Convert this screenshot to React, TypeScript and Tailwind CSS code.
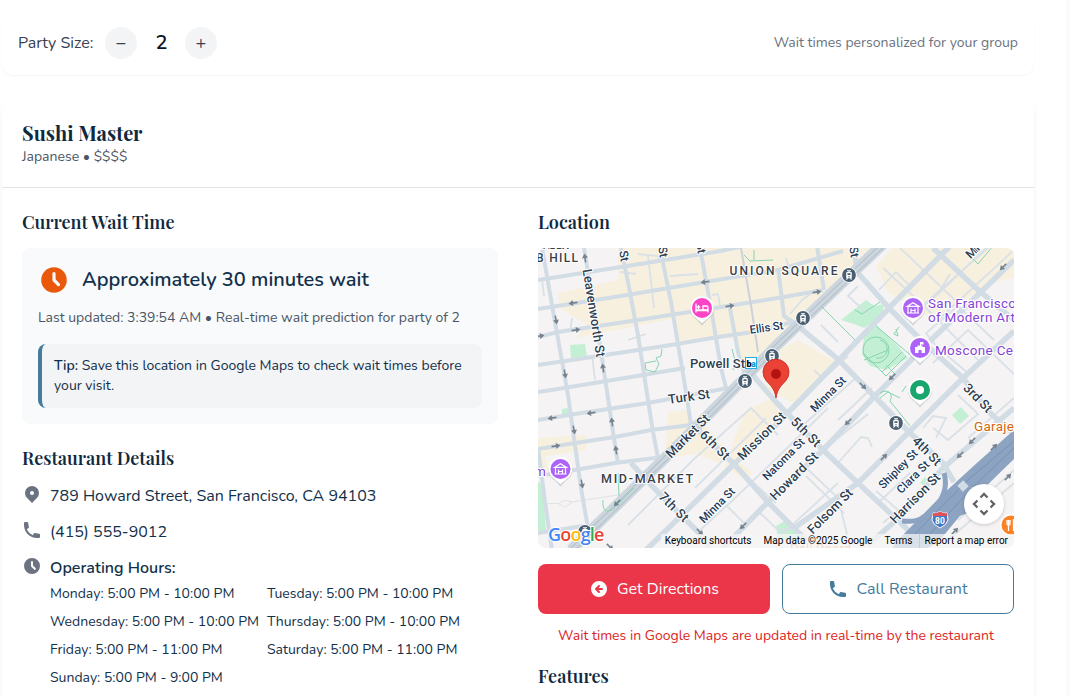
import React, { useState } from "react";
import { HiArrowCircleLeft, HiClock, HiLocationMarker, HiPhone } from "react-icons/hi";

const HOURS = [
  "Monday: 5:00 PM - 10:00 PM",
  "Tuesday: 5:00 PM - 10:00 PM",
  "Wednesday: 5:00 PM - 10:00 PM",
  "Thursday: 5:00 PM - 10:00 PM",
  "Friday: 5:00 PM - 11:00 PM",
  "Saturday: 5:00 PM - 11:00 PM",
  "Sunday: 5:00 PM - 9:00 PM",
];

function Heading({ children }: { children: React.ReactNode }) {
  return (
    <h3 className="font-['Playfair_Display','Liberation_Serif',serif] text-lg leading-7 font-semibold text-[#0f2940]">
      {children}
    </h3>
  );
}

const AREAS = [
  "80,0 341,0 300,40 260,80 240,95 205,122 198,90 142,94 138,70 38,90 48,76 22,60 20,45 80,32",
  "338,18 355,0 476,0 476,30 450,35 430,50 395,73 380,60 350,45",
  "238,104 260,92 300,115 255,155 226,140",
  "130,164 152,162 152,175 168,178 200,214 178,214 158,206 127,210",
  "0,202 0,190 48,187 48,202 8,208 10,225 2,228",
  "207,163 240,147 240,168 222,186 200,214 215,224 207,232 186,218",
];

const GREENS = [
  "303,72 328,52 336,58 346,56 344,68 326,80 316,76",
  "326,88 338,77 360,98 370,110 348,122 332,118 324,106",
  "32,97 47,96 49,109 33,110",
  "24,161 30,160 31,166 24,167",
  "0,234 4,236 8,282 0,284",
  "423,159 431,168 422,176 414,167",
  "238,278 250,271 268,292 240,292",
  "382,235 387,229 389,231 386,237",
];

const MINOR = [
  "90,277 155,212 213,160 218,165 240,187",
  "157,240 228,170",
  "160,284 195,252 245,204 290,160",
  "188,257 208,277",
  "210,230 238,255",
  "262,180 320,128",
  "240,290 300,235",
  "221,264 240,282 258,280",
  "320,235 300,215 323,189 330,190 334,199",
  "268,228 306,265",
  "285,202 330,166",
  "300,172 334,140",
  "262,214 300,250 310,290",
  "340,255 372,225",
  "338,243 360,262 345,275",
  "345,20 385,57 400,72 440,112",
  "341,42 358,24 374,40",
  "374,68 400,46 450,-2",
  "385,57 450,0",
  "400,72 476,2",
  "360,-2 420,55",
  "412,26 400,46",
  "430,125 400,100 388,85 420,58 456,92",
  "395,115 430,82 476,126",
  "276,122 285,131 310,108",
  "283,77 300,94",
  "252,66 264,52 278,42",
  "320,38 310,48 330,66",
  "385,180 395,168 408,170 398,190",
  "395,180 410,192 440,166 420,147",
  "430,190 476,150",
  "110,8 116,60",
  "100,6 120,8 122,14",
  "82,24 98,26",
  "132,28 160,26",
  "174,47 180,46 182,58",
  "32,84 34,70",
  "4,31 6,48",
  "54,107 57,132",
  "90,92 108,86",
  "420,272 476,222",
  "340,290 372,262",
  "410,292 476,235",
  "240,25 246,70",
  "248,10 252,26 268,22",
];

const STREETS = [
  "0,32 83,19 177,4 202,-1",
  "0,61 83,48 167,34 240,22 305,3",
  "0,89 20,84 100,72 177,60 240,50 285,42",
  "0,117 67,107 133,97 180,89 215,84 255,74",
  "0,144 20,141 93,129 147,120",
  "0,172 37,166 110,155 190,140",
  "0,201 37,195 77,189 113,182 153,177",
  "0,228 37,222 77,215 125,209",
  "0,285 45,278",
  "4,0 17,74 27,130 30,147 37,197 43,240 50,280",
  "46,0 56,60 64,110 70,150 75,184 80,215",
  "83,0 90,34 100,87 110,152 115,184 120,210",
  "122,0 133,54 143,114 149,150 153,177",
  "162,0 173,60 183,120 188,140",
  "192,60 200,104 207,128",
  "0,200 7,254 14,302",
  "240,20 246,68 255,74",
  "279,-2 286,42",
];

const ARTERIALS = [
  "108,302 195,217 240,175 301,112 351,60 413,-3",
  "183,302 230,254 285,202 335,150 388,97 476,12",
  "256,280 320,235 371,184 425,130 476,83",
  "330,297 355,275 405,220 476,160",
  "152,174 197,217 230,254 268,292",
  "212,124 238,154 285,202 320,235 368,280 385,300",
  "255,74 301,112 338,150 371,184 405,215 416,234",
  "315,-2 320,25 351,60 388,97 425,130 451,164 476,186",
  "395,0 438,40 476,72",
  "93,215 113,237 160,284 172,300",
];

const ARROWS: [number, number, number][] = [
  [47, 10, -98], [35, 55, 172], [167, 34, 172], [192, 58, -8], [18, 72, 80], [38, 82, -8],
  [27, 126, 80], [65, 120, -98], [2, 88, -8], [279, 44, -8], [465, 19, 135], [325, 138, 45],
  [354, 129, 135], [14, 170, 172], [53, 165, 172], [36, 182, 80], [74, 174, -98], [18, 198, -8],
  [78, 202, -98], [44, 236, 80], [79, 255, 135], [205, 278, 135], [310, 174, 135], [346, 209, -45],
  [434, 193, 135], [422, 207, 135], [456, 199, -45], [470, 229, -45], [417, 283, -45], [72, 299, 45],
  [162, 284, 45],
];

const STATIONS = [[311, 27], [265, 70], [234, 108], [207, 133], [358, 175], [47, 284]];

type LabelProps = {
  x: number;
  y: number;
  w: number;
  r?: number;
  size?: number;
  fill?: string;
  weight?: number;
  children: string;
};

function MapLabel({ x, y, w, r = 0, size = 13, fill = "#2f4050", weight = 500, children }: LabelProps) {
  return (
    <text
      transform={`translate(${x} ${y}) rotate(${r})`}
      textAnchor="middle"
      dominantBaseline="central"
      textLength={w}
      fontSize={size}
      fontWeight={weight}
      fill={fill}
      stroke="#ffffff"
      strokeWidth="2"
      strokeLinejoin="round"
      paintOrder="stroke"
    >
      {children}
    </text>
  );
}

function Poi({ x, y, fill, children }: { x: number; y: number; fill: string; children: React.ReactNode }) {
  return (
    <g transform={`translate(${x} ${y})`}>
      <path d="M0 17.5C-1.5 15.5-4 13-7 10.5A12 12 0 1 1 7 10.5C4 13 1.5 15.5 0 17.5Z" fill="#9aa3ab" opacity=".45" />
      <path d="M0 15.5C-1.5 13.5-4 12-7 9.2A11.8 11.8 0 1 1 7 9.2C4 12 1.5 13.5 0 15.5Z" fill="#fff" />
      <circle r="10" fill={fill} />
      {children}
    </g>
  );
}

function Museum() {
  return (
    <g fill="none" stroke="#fff" strokeWidth="1.2">
      <path d="M-6 -1.6L0 -5.2L6 -1.6Z" />
      <path d="M-5 -1V4.5M5 -1V4.5M-6 5H6M-2 4.5V0.5M2 4.5V0.5M-2 2.5H2" />
    </g>
  );
}

function MapCanvas() {
  return (
    <svg viewBox="0 0 476 300" className="block h-full w-full font-[Roboto,sans-serif]">
      <rect width="476" height="300" fill="#f5f3f4" />
      {AREAS.map((p) => <polygon key={p} points={p} fill="#f8f0df" />)}
      {GREENS.map((p) => <polygon key={p} points={p} fill="#c3f0d4" />)}
      <g fill="none" stroke="#d9e1e7" strokeWidth="1.8">
        {MINOR.map((p) => <polyline key={p} points={p} />)}
      </g>
      <path d="M10 255.5H20L27 252L34 254L80 247M20 255.5L27 259L34 254" fill="none" stroke="#dfe3e6" />
      <g fill="none" stroke="#d2dce4" strokeWidth="4">
        {STREETS.map((p) => <polyline key={p} points={p} />)}
      </g>
      <g fill="none" stroke="#d2dce4" strokeWidth="5.5" strokeLinejoin="round">
        {ARTERIALS.map((p) => <polyline key={p} points={p} />)}
      </g>
      <path d="M203 0L213 57L220 104" fill="none" stroke="#cdd2d8" strokeWidth="2" />
      <path d="M345 -4L238 98L187 150L127 210L33 302" fill="none" stroke="#ccd6de" strokeWidth="11" />
      <path d="M343 -4L236 98L185 150L125 210L31 302M348 -3L240 100L189 152L129 212L36 303" fill="none" stroke="#b9c2ca" strokeWidth="1.2" />
      <path d="M283 58L317 92M317 62L324 66L342 54M338 78L376 110M124 101L123 108L118 110L121 116L117 124L108 122L107 115L118 113M206 7L212 13L235 12M216 2V12M434 10L440 16L455 -2M65 252C64 262 68 265 74 262L96 240M80 225L81 248M194 101L197 112L195 122M342 145C350 140 356 146 352 153L372 178M342 150L350 144L362 150M364 144L368 138M326 106L348 128L368 108M344 124L364 104M348 117L358 127M358 81L360 88L356 86L361 79" fill="none" stroke="#85d4b0" strokeWidth="1" />
      <circle cx="338" cy="102" r="13" fill="none" stroke="#85d4b0" />
      <path d="M342 92A8 8 0 1 1 338 110M326 112L350 102" fill="none" stroke="#85d4b0" />
      <path d="M476 182L440 214L405 246L362 290L354 300H390L402 292L440 246L476 211Z" fill="#8ca3c1" />
      <path d="M406 225C412 245 398 262 384 270C376 275 370 273 364 273M438 262C420 262 412 270 394 288" fill="none" stroke="#8ca3c1" strokeWidth="5" />
      <path d="M476 193L430 232L365 298M476 200L434 240L380 299" fill="none" stroke="#7992b4" />
      <rect x="421" y="234" width="8" height="8" transform="rotate(-43 425 238)" fill="#d2dce4" />
      {ARROWS.map(([x, y, r]) => (
        <g key={`${x}-${y}`} transform={`translate(${x} ${y}) rotate(${r})`}>
          <path d="M-4.5 0H1" stroke="#76828d" strokeWidth="1.6" />
          <path d="M0 -3L4.5 0L0 3Z" fill="#76828d" />
        </g>
      ))}

      {STATIONS.map(([x, y]) => (
        <g key={`${x}-${y}`} transform={`translate(${x} ${y})`}>
          <circle r="7.8" fill="#fff" />
          <circle r="6.9" fill="#4a6072" />
          <path d="M-2 -4.3H2M0 -4V-2.5M-2.5 4.6L-1.5 3M2.5 4.6L1.5 3" fill="none" stroke="#fff" strokeWidth="1.1" />
          <rect x="-2.8" y="-3" width="5.6" height="6.2" rx="1" fill="#fff" />
          <path d="M-1.5 -1.7H1.5V0H-1.5ZM-.7 1.2H.7V2.2H-.7Z" fill="#4a6072" />
        </g>
      ))}

      <MapLabel x={12} y={-3} w={38} size={12}>TENDER</MapLabel>
      <MapLabel x={19} y={9.5} w={42} size={12} fill="#394047">B HILL</MapLabel>
      <MapLabel x={245.5} y={22.5} w={108} size={12} fill="#394047">UNION SQUARE</MapLabel>
      <MapLabel x={109} y={230} w={92} size={12.5} fill="#394047">MID-MARKET</MapLabel>
      <MapLabel x={56} y={65} w={89} r={81}>Leavenworth St</MapLabel>
      <MapLabel x={86} y={8} w={11} r={81} size={12}>St</MapLabel>
      <MapLabel x={125} y={4} w={11} r={81} size={12}>St</MapLabel>
      <MapLabel x={163} y={0} w={11} r={81} size={12}>St</MapLabel>
      <MapLabel x={316} y={4} w={11} r={81} size={12}>St</MapLabel>
      <MapLabel x={436} y={2} w={18} r={-45} size={12}>Min</MapLabel>
      <MapLabel x={228.5} y={79.5} w={34} r={-8} size={11.5} fill="#1e3a5c">Ellis St</MapLabel>
      <MapLabel x={179.5} y={115} w={55}>Powell St</MapLabel>
      <MapLabel x={151} y={148.5} w={42} r={-8}>Turk St</MapLabel>
      <MapLabel x={149.5} y={188} w={56} r={-45}>Market St</MapLabel>
      <MapLabel x={177} y={197} w={36} r={45}>6th St</MapLabel>
      <MapLabel x={223.5} y={188} w={62} r={-45}>Mission St</MapLabel>
      <MapLabel x={268} y={184} w={36} r={45}>5th St</MapLabel>
      <MapLabel x={290} y={146} w={45} r={-45} size={11.5} fill="#1e3a5c">Minna St</MapLabel>
      <MapLabel x={245.5} y={211} w={54} r={-45} size={11.5} fill="#1e3a5c">Natoma St</MapLabel>
      <MapLabel x={256} y={228} w={62} r={-45}>Howard St</MapLabel>
      <MapLabel x={179} y={257} w={45} r={-45} size={11.5} fill="#1e3a5c">Minna St</MapLabel>
      <MapLabel x={136} y={259} w={36} r={45}>7th St</MapLabel>
      <MapLabel x={292} y={263} w={58} r={-45}>Folsom St</MapLabel>
      <MapLabel x={360} y={221} w={50} r={-45} size={11.5} fill="#1e3a5c">Shipley St</MapLabel>
      <MapLabel x={375} y={229} w={41} r={-45} size={11.5} fill="#1e3a5c">Clara St</MapLabel>
      <MapLabel x={377} y={250} w={65} r={-45}>Harrison St</MapLabel>
      <MapLabel x={389} y={203} w={35} r={45}>4th St</MapLabel>
      <MapLabel x={440} y={150} w={35} r={45}>3rd St</MapLabel>
      <g fill="#8445d6" fontSize="13.5" stroke="#fff" strokeWidth="2.5" paintOrder="stroke" strokeLinejoin="round">
        <text x="390" y="60" textLength="88">San Francisco</text>
        <text x="390" y="74" textLength="87">of Modern Art</text>
        <text x="397" y="107" textLength="78">Moscone Ce</text>
        <text x="-4" y="228">m</text>
        <text x="436" y="183" fill="#d5650d" textLength="40">Garaje</text>
        <text x="252" y="305" fill="#e0853f">Deli Board</text>
      </g>

      <rect x="207.5" y="109.5" width="11" height="11" fill="#fff" stroke="#21aee6" />
      <text x="208.5" y="118.5" fontSize="9" fontWeight="900" letterSpacing="-.6">b<tspan fill="#159bd7">a</tspan></text>

      <Poi x={164} y={60} fill="#fb43c6">
        <path d="M-6 -4.5V4.5M-6 2.5H6V4.5M-5.5 2H6V-.5Q6 -2 4.5 -2H1V2M-3.5 -3V1M-5.2 -1H-1.8" fill="none" stroke="#fff" strokeWidth="1.3" />
      </Poi>
      <Poi x={375} y={60} fill="#ad63f8"><Museum /></Poi>
      <Poi x={22.5} y={221} fill="#ad63f8"><Museum /></Poi>
      <Poi x={382} y={100} fill="#ad63f8">
        <path d="M-5 5V-1H-2.5V-2.5H0V-6H3.5V-3.5H1V-2.5H2.5V-1H5V5H1.5V2H-1.5V5Z" fill="#fff" />
      </Poi>
      <Poi x={382} y={142} fill="#18a66e"><circle r="4" fill="#fff" /></Poi>
      <g transform="translate(473 277)">
        <circle r="11" fill="#fff" /><circle r="9.5" fill="#fb8325" />
        <path d="M-4 -5V-1Q-4 0 -2.5 0V6M-1 -5V-1Q-1 0 -2.5 0V-5M2.5 6V-5Q5 -3 5 1H2.5" fill="none" stroke="#fff" strokeWidth="1.3" />
      </g>
      <path d="M395 265Q398 266 402 263.5Q406 266 409 265L410 272Q409 277 402 280Q395 277 394 272Z" fill="#4379c6" stroke="#fff" />
      <path d="M395 265Q398 266 402 263.5Q406 266 409 265L409.5 268H394.5Z" fill="#e0525a" />
      <text x="402" y="275.5" textAnchor="middle" fontSize="8.5" fontWeight="700" fill="#fff">80</text>

      <path d="M238 150C236.5 140 232 137 228 132.5A13 13 0 1 1 248 132.5C244 137 239.5 140 238 150Z" fill="#ea4335" stroke="#c5221f" strokeWidth=".8" />
      <circle cx="238" cy="126" r="5" fill="#b31412" />
    </svg>
  );
}

function LocationMap() {
  return (
    <div className="relative h-[300px] overflow-hidden rounded-lg">
      <MapCanvas />
      <div className="absolute bottom-[2px] left-[10px] flex font-['Open_Sans',sans-serif] text-[18px] leading-6 font-semibold tracking-[-0.8px] [-webkit-text-stroke:2px_white] [paint-order:stroke_fill]">
        <span className="text-[#4285f4]">G</span>
        <span className="text-[#ea4335]">o</span>
        <span className="text-[#fbbc04]">o</span>
        <span className="text-[#4285f4]">g</span>
        <span className="text-[#34a853]">l</span>
        <span className="text-[#ea4335]">e</span>
      </div>
      <div className="absolute right-0 bottom-0 flex h-[14px] items-center bg-[#f5f5f5]/75 pr-[6px] font-[Roboto,sans-serif] text-[10px] leading-[14px] whitespace-nowrap text-black">
        <span className="pr-[6px] pl-1">Keyboard shortcuts</span>
        <span className="px-[6px]">Map data ©2025 Google</span>
        <span className="px-[6px]">Terms</span>
        <span className="border-l border-[#c8ccd0] pl-[5px]">Report a map error</span>
      </div>
      <button className="absolute right-[10px] bottom-[24px] flex size-10 items-center justify-center rounded-full bg-white shadow-[0_1px_4px_-1px_rgba(0,0,0,0.3)]">
        <svg viewBox="0 0 24 24" className="size-6" fill="none" stroke="#666666" strokeWidth="2.4">
          <path d="M8.5 5.5L12 2L15.5 5.5M8.5 18.5L12 22L15.5 18.5M5.5 8.5L2 12L5.5 15.5M18.5 8.5L22 12L18.5 15.5" />
        </svg>
      </button>
    </div>
  );
}

export default function App() {
  const [size, setSize] = useState(2);
  return (
    <div className="flex h-[696px] w-full overflow-hidden bg-white font-[Nunito,Lato,sans-serif] text-[#12304a]">
      <main className="flex w-[1066px] flex-col gap-6 pt-[11px] pr-8 pl-[2px]">
        <section className="flex h-16 shrink-0 items-center justify-between rounded-xl px-4 shadow-[0_1px_2px_rgba(0,0,0,0.05)]">
          <div className="flex items-center">
            <span className="w-[87px] text-base whitespace-nowrap text-[#374151]">Party Size:</span>
            <button
              onClick={() => setSize(Math.max(1, size - 1))}
              className="flex size-8 items-center justify-center rounded-full bg-[#f3f4f6] text-lg text-[#374151]"
            >
              −
            </button>
            <span className="w-12 pl-px text-center text-xl font-semibold text-[#0b1526]">{size}</span>
            <button
              onClick={() => setSize(size + 1)}
              className="flex size-8 items-center justify-center rounded-full bg-[#f3f4f6] text-lg text-[#374151]"
            >
              +
            </button>
          </div>
          <span className="text-sm text-[#6b7280]">Wait times personalized for your group</span>
        </section>

        <section className="h-[640px] shrink-0 rounded-xl shadow-[0_4px_6px_-1px_rgba(0,0,0,0.08)]">
          <header className="border-b border-[#e0e2e6] p-5">
            <h2 className="font-['Playfair_Display','Liberation_Serif',serif] text-xl leading-7 font-bold text-[#0f2940]">Sushi Master</h2>
            <p className="text-sm text-[#4b5563]">Japanese • $$$$</p>
          </header>

          <div className="grid grid-cols-2 gap-10 p-5">
            <div>
              <Heading>Current Wait Time</Heading>
              <div className="mt-3 mb-5 rounded-lg bg-[#f9fafc] p-4">
                <div className="mb-3 flex items-center gap-3">
                  <HiClock className="size-8 text-[#ea580c]" />
                  <span className="text-xl font-semibold">Approximately 30 minutes wait</span>
                </div>
                <p className="text-sm whitespace-nowrap text-[#4b5563]">
                  Last updated: 3:39:54 AM • Real-time wait prediction for party of 2
                </p>
                <p className="mt-4 rounded-lg border-l-4 border-[#457b9d] bg-[#f3f4f6] p-3 text-sm">
                  <span className="font-semibold">Tip:</span> Save this location in Google Maps to check wait times before your visit.
                </p>
              </div>

              <Heading>Restaurant Details</Heading>
              <div className="mt-3 flex flex-col gap-3">
                <div className="flex items-start gap-2">
                  <HiLocationMarker className="size-5 text-[#6b7280]" />
                  <span className="text-base">789 Howard Street, San Francisco, CA 94103</span>
                </div>
                <div className="flex items-start gap-2">
                  <HiPhone className="size-5 text-[#6b7280]" />
                  <span className="text-base">(415) 555-9012</span>
                </div>
                <div className="flex items-start gap-2">
                  <HiClock className="size-5 text-[#6b7280]" />
                  <div className="flex-1">
                    <p className="text-base font-semibold">Operating Hours:</p>
                    <div className="mt-1 grid grid-cols-[209px_1fr] gap-2 text-sm whitespace-nowrap">
                      {HOURS.map((h) => <span key={h}>{h}</span>)}
                    </div>
                  </div>
                </div>
              </div>
            </div>

            <div>
              <Heading>Location</Heading>
              <div className="mt-3"><LocationMap /></div>
              <div className="mt-4 grid grid-cols-2 gap-3">
                <button className="flex h-[50px] items-center justify-center gap-2 rounded-lg bg-[#eb3549] text-base text-white">
                  <HiArrowCircleLeft className="size-5" />
                  Get Directions
                </button>
                <button className="flex h-[50px] items-center justify-center gap-2 rounded-lg border border-[#457b9d] text-base text-[#457b9d]">
                  <HiPhone className="size-5" />
                  Call Restaurant
                </button>
              </div>
              <p className="mt-3 mb-4 text-center text-sm text-[#dc2626]">
                Wait times in Google Maps are updated in real-time by the restaurant
              </p>
              <Heading>Features</Heading>
            </div>
          </div>
        </section>
      </main>
      <div className="flex-1 bg-[#fafafa]" />
    </div>
  );
}
